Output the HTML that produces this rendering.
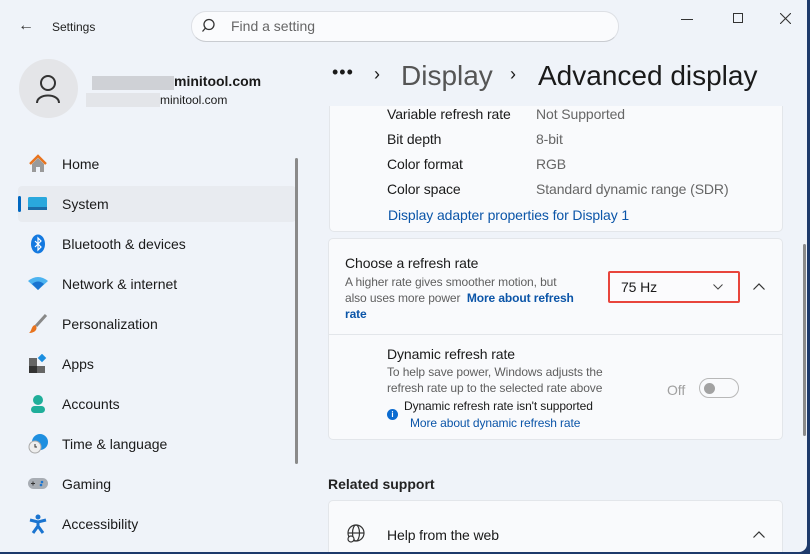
<!DOCTYPE html>
<html><head><meta charset="utf-8"><style>
*{margin:0;padding:0;box-sizing:border-box}
body{width:810px;height:554px;background:#1d3a6b;font-family:"Liberation Sans",sans-serif;position:relative;overflow:hidden;color:#1a1a1a}
.win{position:absolute;left:0;top:0;width:807px;height:552px;background:#eff3f9;border-radius:0 0 8px 0;overflow:hidden}
.a{position:absolute;white-space:nowrap}
.nav{position:absolute;left:18px;width:278px;height:36px;font-size:14px}
.nav span{position:absolute;left:44px;top:10px}
.ic{position:absolute;left:10px;top:8px;width:20px;height:20px}
.card{position:absolute;background:#f9fafc;border:1px solid #e3e6ea;border-radius:5px}
.t13{font-size:14px;letter-spacing:-0.1px}
.s{font-size:12px;color:#5f5f5f;letter-spacing:-0.1px}
.lnk{color:#0b55a8;font-weight:bold}
</style></head><body><div class="win">
<div class="a" style="left:18px;top:17px;font-size:16px;color:#333">&#8592;</div>
<div class="a" style="left:52px;top:20px;font-size:12px;color:#222">Settings</div>
<div class="a" style="left:191px;top:11px;width:428px;height:31px;background:#fafbfd;border:1px solid #dde0e5;border-bottom-color:#c9ccd1;border-radius:15px"></div>
<svg class="a" style="left:202px;top:18px" width="16" height="16"><circle cx="7" cy="6.5" r="5" fill="none" stroke="#333" stroke-width="1.3"/><path d="M3.5 10 L0.5 13.5" stroke="#333" stroke-width="1.3"/></svg>
<div class="a" style="left:231px;top:18px;font-size:14px;color:#666">Find a setting</div>
<div class="a" style="left:681px;top:19px;width:12px;border-top:1px solid #333"></div>
<div class="a" style="left:733px;top:13px;width:10px;height:10px;border:1px solid #333"></div>
<svg class="a" style="left:780px;top:13px" width="11" height="11"><path d="M0 0L11 11M11 0L0 11" stroke="#333" stroke-width="1.1"/></svg>
<div class="a" style="left:19px;top:59px;width:59px;height:59px;border-radius:50%;background:#e4e5e8"></div>
<svg class="a" style="left:33px;top:74px" width="30" height="30"><circle cx="15" cy="9" r="7" fill="none" stroke="#333" stroke-width="2"/><path d="M4 29 C4 19 26 19 26 29" fill="none" stroke="#333" stroke-width="2"/></svg>
<div class="a" style="left:92px;top:76px;width:82px;height:14px;background:#cfd1d6"></div>
<div class="a" style="left:174px;top:73px;font-size:14px;font-weight:bold">minitool.com</div>
<div class="a" style="left:86px;top:93px;width:74px;height:14px;background:#e3e5e9"></div>
<div class="a" style="left:160px;top:93px;font-size:12px">minitool.com</div>
<div class="a" style="left:332px;top:62px;font-size:18px;letter-spacing:1px">&#8226;&#8226;&#8226;</div>
<div class="a" style="left:374px;top:64px;font-size:18px">&#8250;</div>
<div class="a" style="left:401px;top:60px;font-size:28px;color:#555">Display</div>
<div class="a" style="left:510px;top:64px;font-size:18px">&#8250;</div>
<div class="a" style="left:538px;top:60px;font-size:28px">Advanced display</div>

<div class="nav" style="top:146px"><svg class="ic" viewBox="0 0 20 20"><path d="M2 10 L10 2 L18 10" fill="none" stroke="#e8731e" stroke-width="2.4"/><path d="M4 10 V18 H8 V13 H12 V18 H16 V10 L10 4Z" fill="#9a9a9a"/></svg><span>Home</span></div>
<div class="nav" style="top:186px;background:#e8ebf0;border-radius:4px"><div class="a" style="left:0;top:10px;width:3px;height:16px;background:#0067c0;border-radius:2px"></div><svg class="ic" viewBox="0 0 20 20"><rect x="0" y="3" width="19" height="13" rx="1.5" fill="#2aa8dd"/><rect x="0" y="13" width="19" height="3" fill="#1b6ca8"/></svg><span>System</span></div>
<div class="nav" style="top:226px"><svg class="ic" viewBox="0 0 20 20"><ellipse cx="10" cy="10" rx="7" ry="9.5" fill="#1479e0"/><path d="M7 7 L13 13 L10 16 V4 L13 7 L7 13" fill="none" stroke="#fff" stroke-width="1.2"/></svg><span>Bluetooth &amp; devices</span></div>
<div class="nav" style="top:266px"><svg class="ic" viewBox="0 0 20 20"><path d="M0 7 Q10 -1 20 7 L10 16Z" fill="#4cb3f0"/><path d="M4 10 Q10 5 16 10 L10 16Z" fill="#1a74d0"/></svg><span>Network &amp; internet</span></div>
<div class="nav" style="top:306px"><svg class="ic" viewBox="0 0 20 20"><path d="M18 1 L8 12" stroke="#888" stroke-width="3"/><path d="M7 11 C3 12 4 17 1 19 C6 19 10 16 8 12Z" fill="#e8731e"/></svg><span>Personalization</span></div>
<div class="nav" style="top:346px"><svg class="ic" viewBox="0 0 20 20"><rect x="1" y="4" width="8" height="8" fill="#666"/><rect x="1" y="12" width="8" height="7" fill="#333"/><rect x="9" y="12" width="8" height="7" fill="#666"/><rect x="11" y="1" width="6" height="6" fill="#1a8ee0" transform="rotate(45 14 4)"/></svg><span>Apps</span></div>
<div class="nav" style="top:386px"><svg class="ic" viewBox="0 0 20 20"><circle cx="10" cy="6" r="5" fill="#1fae9a"/><rect x="3" y="12" width="14" height="7" rx="3.5" fill="#1fae9a"/></svg><span>Accounts</span></div>
<div class="nav" style="top:426px"><svg class="ic" viewBox="0 0 20 20"><circle cx="12" cy="8" r="8" fill="#1e8fe0"/><circle cx="7" cy="13" r="6" fill="#eee" stroke="#aaa"/><path d="M7 10 V13 H9" stroke="#333" fill="none"/></svg><span>Time &amp; language</span></div>
<div class="nav" style="top:466px"><svg class="ic" viewBox="0 0 20 20"><rect x="0" y="4" width="20" height="11" rx="5.5" fill="#a8adb4"/><path d="M3 9.5 H7 M5 7.5 V11.5" stroke="#333"/><circle cx="14" cy="8" r="1.3" fill="#1a74d0"/><circle cx="13" cy="11" r="1.3" fill="#1a74d0"/></svg><span>Gaming</span></div>
<div class="nav" style="top:506px"><svg class="ic" viewBox="0 0 20 20"><circle cx="10" cy="3" r="2.5" fill="#1a74d0"/><path d="M2 6 L10 8 L18 6 M10 8 V12 L5 19 M10 12 L15 19" stroke="#1a74d0" stroke-width="3" fill="none"/></svg><span>Accessibility</span></div>
<div class="a" style="left:295px;top:158px;width:3px;height:306px;background:#8a8a8a;border-radius:2px"></div>

<div class="card" style="left:329px;top:96px;width:454px;height:136px;border-top:none;border-radius:0 0 5px 5px"></div>
<div class="a t13" style="left:387px;top:106px">Variable refresh rate</div><div class="a t13" style="left:536px;top:106px;color:#666">Not Supported</div>
<div class="a t13" style="left:387px;top:131px">Bit depth</div><div class="a t13" style="left:536px;top:131px;color:#666">8-bit</div>
<div class="a t13" style="left:387px;top:156px">Color format</div><div class="a t13" style="left:536px;top:156px;color:#666">RGB</div>
<div class="a t13" style="left:387px;top:181px">Color space</div><div class="a t13" style="left:536px;top:181px;color:#666">Standard dynamic range (SDR)</div>
<div class="a t13" style="left:388px;top:207px;color:#0b55a8">Display adapter properties for Display 1</div>
<div class="a" style="left:329px;top:91px;width:460px;height:15px;background:#eff3f9"></div>

<div class="card" style="left:328px;top:238px;width:455px;height:202px"></div>
<div class="a" style="left:329px;top:334px;width:453px;border-top:1px solid #e3e6ea"></div>
<div class="a t13" style="left:345px;top:255px">Choose a refresh rate</div>
<div class="a s" style="left:345px;top:274px;line-height:16px">A higher rate gives smoother motion, but<br>also uses more power&nbsp; <span class="lnk">More about refresh</span><br><span class="lnk">rate</span></div>
<div class="a" style="left:608px;top:271px;width:132px;height:32px;border:2px solid #e8453c;border-radius:2px;background:#fbfbfd"></div>
<div class="a t13" style="left:621px;top:279px">75 Hz</div>
<svg class="a" style="left:713px;top:284px" width="10" height="6"><path d="M0.5 0.5L5 5L9.5 0.5" fill="none" stroke="#444"/></svg>
<svg class="a" style="left:753px;top:283px" width="12" height="7"><path d="M0.5 6.5L6 1L11.5 6.5" fill="none" stroke="#333" stroke-width="1.2"/></svg>
<div class="a t13" style="left:387px;top:346px">Dynamic refresh rate</div>
<div class="a s" style="left:387px;top:364px;line-height:16px">To help save power, Windows adjusts the<br>refresh rate up to the selected rate above</div>
<div class="a" style="left:387px;top:409px;width:11px;height:11px;border-radius:50%;background:#0b6bd0;color:#fff;font-size:8px;font-weight:bold;text-align:center;line-height:11px">i</div>
<div class="a" style="left:404px;top:399px;font-size:12px;letter-spacing:-0.1px">Dynamic refresh rate isn't supported</div>
<div class="a" style="left:410px;top:416px;font-size:12px;color:#0b55a8;letter-spacing:-0.1px">More about dynamic refresh rate</div>
<div class="a t13" style="left:667px;top:382px;color:#a0a0a0">Off</div>
<div class="a" style="left:699px;top:378px;width:40px;height:20px;border:1px solid #b8b8b8;border-radius:10px"></div>
<div class="a" style="left:704px;top:383px;width:11px;height:11px;border-radius:50%;background:#a2a2a2"></div>

<div class="a" style="left:328px;top:476px;font-size:14px;font-weight:bold;color:#222">Related support</div>
<div class="card" style="left:328px;top:500px;width:455px;height:70px"></div>
<svg class="a" style="left:346px;top:524px" width="20" height="20" viewBox="0 0 20 20"><circle cx="10" cy="9" r="8" fill="none" stroke="#333" stroke-width="1.2"/><ellipse cx="10" cy="9" rx="3.5" ry="8" fill="none" stroke="#333" stroke-width="1.2"/><path d="M2 9H18" stroke="#333" stroke-width="1.2"/><circle cx="5" cy="15" r="3" fill="#f9fafc" stroke="#333" stroke-width="1.2"/></svg>
<div class="a t13" style="left:387px;top:527px">Help from the web</div>
<svg class="a" style="left:753px;top:531px" width="12" height="7"><path d="M0.5 6.5L6 1L11.5 6.5" fill="none" stroke="#333" stroke-width="1.2"/></svg>
<div class="a" style="left:803px;top:244px;width:3px;height:192px;background:#8a8a8a;border-radius:2px"></div>
</div></body></html>
